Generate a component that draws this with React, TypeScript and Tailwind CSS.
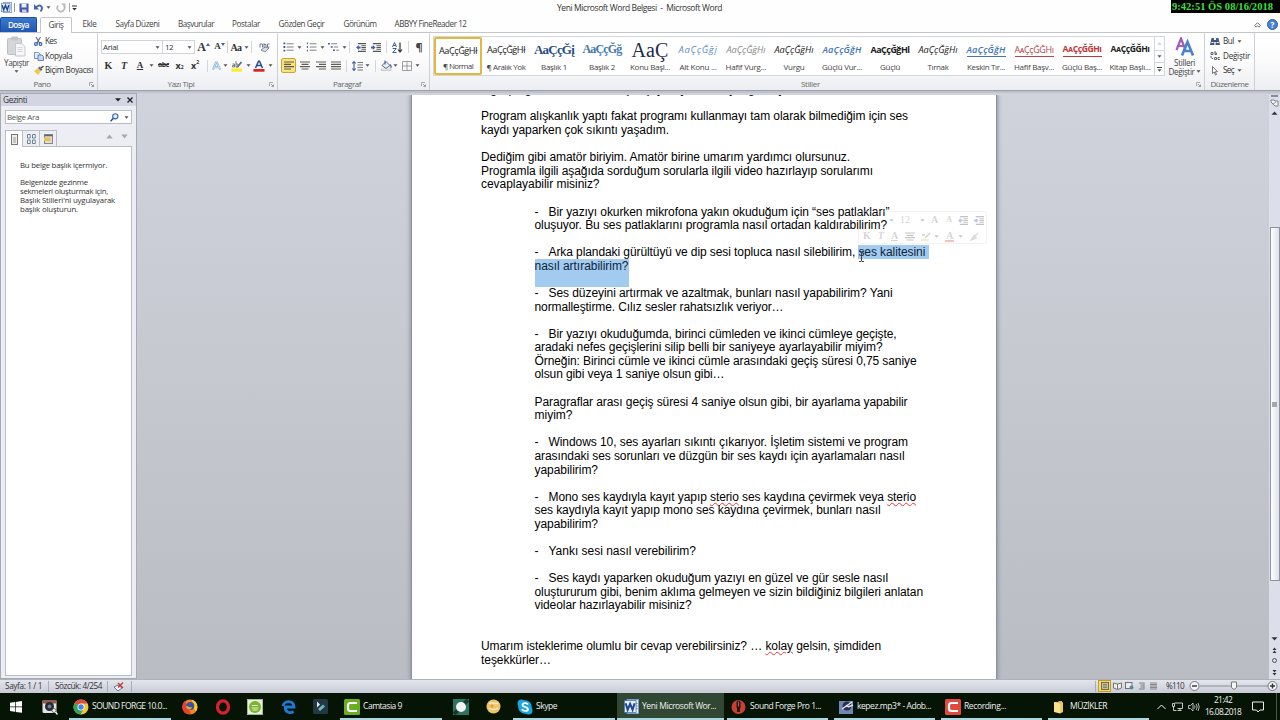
import { useLayoutEffect, useRef, type ReactNode } from 'react';
import clsx from 'clsx';

interface FitProps {
  w: number;
  className?: string;
  children: ReactNode;
}

// Text that is tracked in or out until it is exactly `w` pixels wide.
function Fit({ w, className, children }: FitProps) {
  const ref = useRef<HTMLSpanElement>(null);

  useLayoutEffect(() => {
    const el = ref.current;
    if (!el) return;
    el.style.letterSpacing = '0px';
    const natural = el.getBoundingClientRect().width;
    const count = el.textContent?.length || 1;
    el.style.letterSpacing = `${(w - natural) / count}px`;
  }, [w, children]);

  return (
    <span ref={ref} className={clsx('inline-block whitespace-pre', className)}>
      {children}
    </span>
  );
}

function Caret({ className }: { className?: string }) {
  return (
    <svg width="5" height="3" viewBox="0 0 5 3" className={clsx('shrink-0', className)}>
      <path d="M0.5 0.3h4L2.5 2.7z" fill="#555" />
    </svg>
  );
}

function Cell({ className, children }: { className: string; children?: ReactNode }) {
  return <div className={clsx('flex h-full shrink-0 items-center justify-center', className)}>{children}</div>;
}

function Sep() {
  return <div className="h-[12px] w-px shrink-0 bg-[#d3d6db]" />;
}

function WordIcon({ size }: { size: number }) {
  return (
    <svg width={size} height={size} viewBox="0 0 14 14" className="shrink-0">
      <rect x="3" y="0.5" width="10.5" height="13" fill="#fff" stroke="#7f9bc8" />
      <path d="M11 4h2M11 6.500h2M11 9h2" stroke="#6a8cc4" strokeWidth="0.8" />
      <rect x="0.300" y="1.500" width="11" height="11" fill="#e6eefa" stroke="#3d68b0" strokeWidth="0.700" />
      <path d="M1.500 4l1.900 6 2.300-5.500 2.300 5.500L9.900 4" fill="none" stroke="#1d4797" strokeWidth="1.900" />
    </svg>
  );
}

function TitleBar() {
  return (
    <div className="flex h-[17px] shrink-0 items-start bg-[#fefefe]">
      <div className="flex h-[15px] w-[555px] items-center pl-[1px]">
        <WordIcon size={11} />
        <div className="ml-[2px] h-[9px] w-px bg-[#999]" />
        <svg width="10" height="10" viewBox="0 0 10 10" className="ml-[4px]">
          <path d="M0.500 0.500h9v9h-8l-1-1z" fill="#4353ad" />
          <rect x="2.500" y="0.500" width="5" height="4" fill="#e9eefb" />
          <rect x="3" y="6.500" width="4.500" height="3" fill="#c9cfe6" />
        </svg>
        <svg width="10" height="10" viewBox="0 0 10 10" className="ml-[5px]">
          <path d="M2 4.500C6 0 10 4 6.500 8.500" fill="none" stroke="#3f62b5" strokeWidth="1.900" />
          <path d="M0 1v5.500h5z" fill="#3f62b5" />
        </svg>
        <Caret className="ml-[2px]" />
        <svg width="10" height="10" viewBox="0 0 10 10" className="ml-[5px]">
          <path d="M2.200 2.500A3.600 3.600 0 1 0 8 3" fill="none" stroke="#b6b9bd" strokeWidth="1.700" />
          <path d="M5 0.500h4.500v4z" fill="#b6b9bd" />
        </svg>
        <div className="ml-[3px] h-[9px] w-px bg-[#aaa]" />
        <svg width="5" height="6" viewBox="0 0 5 6" className="ml-[2px]">
          <path d="M0 1h5" stroke="#333" />
          <path d="M0.200 3h4.600L2.500 5.500z" fill="#333" />
        </svg>
      </div>
      <div className="flex h-[17px] flex-1 items-center pl-[2px] text-[8.500px] text-[#333]">
        <Fit w={165}>Yeni Microsoft Word Belgesi  -  Microsoft Word</Fit>
      </div>
      <div className="flex h-[13px] w-[109px] items-center bg-black pl-[1px] font-['Liberation_Serif',serif] text-[10.500px] font-bold text-[#3fe03f]">
        <Fit w={101}>9:42:51 ÖS 08/16/2018</Fit>
      </div>
    </div>
  );
}

const tabs = [
  { name: 'Ekle', cell: 'w-[35px]', w: 14 },
  { name: 'Sayfa Düzeni', cell: 'w-[61px]', w: 44 },
  { name: 'Başvurular', cell: 'w-[56px]', w: 36 },
  { name: 'Postalar', cell: 'w-[44px]', w: 28 },
  { name: 'Gözden Geçir', cell: 'w-[67px]', w: 46 },
  { name: 'Görünüm', cell: 'w-[50px]', w: 33 },
  { name: 'ABBYY FineReader 12', cell: 'w-[91px]', w: 72 },
];

function TabRow() {
  return (
    <div className="flex h-[16px] shrink-0 border-b border-[#c3c6cc] bg-[#fefefe] text-[8.100px] text-[#444]">
      <div className="flex w-[37px] items-center justify-center rounded-t-[2px] border border-b-0 border-[#1c4fa0] bg-gradient-to-b from-[#3a78cf] to-[#1f58b4] font-semibold text-white">
        <Fit w={21}>Dosya</Fit>
      </div>
      <div className="-mb-px ml-[3px] flex w-[32px] items-center justify-center rounded-t-[2px] border border-b-0 border-[#c3c6cc] bg-white pb-px">
        <Fit w={15}>Giriş</Fit>
      </div>
      {tabs.map((tab) => (
        <div key={tab.name} className={clsx('flex items-center justify-center', tab.cell)}>
          <Fit w={tab.w}>{tab.name}</Fit>
        </div>
      ))}
      <div className="flex flex-1 items-center justify-end gap-[6px] pr-[2px]">
        <svg width="7" height="6" viewBox="0 0 7 6">
          <path d="M3.500 0.700L6.300 3.500 5 5.200 3.500 3.700 2 5.200 0.700 3.500z" fill="#fff" stroke="#555" strokeWidth="0.800" />
        </svg>
        <div className="flex size-[11px] items-center justify-center rounded-full border border-[#2f5fb5] bg-[#4a80d4] text-[8px] font-bold text-white">
          ?
        </div>
      </div>
    </div>
  );
}

interface GroupProps {
  label: string;
  labelWidth: number;
  className: string;
  launcher?: boolean;
  children: ReactNode;
}

function Group({ label, labelWidth, className, launcher = true, children }: GroupProps) {
  return (
    <div className={clsx('flex shrink-0 flex-col border-r border-[#cdd0d6]', className)}>
      <div className="flex h-[46px]">{children}</div>
      <div className="flex h-[10px] items-center justify-center text-[8px] text-[#666]">
        <div className={clsx('flex flex-1 justify-center', launcher && 'pr-[5px]')}>
          <Fit w={labelWidth}>{label}</Fit>
        </div>
        {launcher && (
          <svg width="5" height="5" viewBox="0 0 5 5" className="mr-[3px]">
            <path d="M0.500 4V0.500H4" fill="none" stroke="#999" strokeWidth="0.800" />
            <path d="M2 2l2.500 2.500M4.500 2.500v2h-2" fill="none" stroke="#888" strokeWidth="0.800" />
          </svg>
        )}
      </div>
    </div>
  );
}

function Clipboard() {
  return (
    <Group label="Pano" labelWidth={17} className="w-[98px]">
      <div className="flex w-[33px] flex-col items-center pt-[3px] text-[8.100px] text-[#444]">
        <svg width="19" height="21" viewBox="0 0 19 21" className="shrink-0">
          <rect x="0.500" y="2.500" width="14" height="16" rx="1" fill="#d5d6da" stroke="#bcbec3" />
          <rect x="4" y="0.500" width="7" height="4" rx="1" fill="#c3c5ca" />
          <path d="M8.500 7.500h6l3.500 3v9.500h-9.500z" fill="#f7f7f9" stroke="#c5c7cc" />
          <path d="M10.500 11.500h5M10.500 13.500h5M10.500 15.500h5" stroke="#d4d6da" />
        </svg>
        <Fit w={25} className="leading-[12px]">Yapıştır</Fit>
        <Caret className="mt-[1px]" />
      </div>
      <div className="flex flex-col pt-[1px] pl-[1px] text-[8.100px] text-[#333]">
        <div className="flex h-[15px] items-center gap-[2px]">
          <svg width="9" height="9" viewBox="0 0 9 9">
            <path d="M2 0l3.500 6M6.500 0L3 6" stroke="#56698f" strokeWidth="1.100" />
            <circle cx="2" cy="7" r="1.400" fill="none" stroke="#2d56a8" strokeWidth="1.100" />
            <circle cx="6.500" cy="7" r="1.400" fill="none" stroke="#2d56a8" strokeWidth="1.100" />
          </svg>
          <Fit w={11.5}>Kes</Fit>
        </div>
        <div className="flex h-[14px] items-center gap-[1px]">
          <svg width="10" height="9" viewBox="0 0 10 9">
            <path d="M0.500 0.500h4l1.500 1.500v4.500H0.500z" fill="#e8f0fb" stroke="#5a7db5" strokeWidth="0.800" />
            <path d="M4 3h4l1.500 1.500v4H4z" fill="#c3d7f1" stroke="#4a70ae" strokeWidth="0.800" />
          </svg>
          <Fit w={27}>Kopyala</Fit>
        </div>
        <div className="flex h-[15px] items-center gap-[1px]">
          <svg width="10" height="9" viewBox="0 0 10 9">
            <path d="M0 5l4-3 3 3-3 4z" fill="#efc94e" />
            <path d="M4 2l1.500-1.500L8.500 3.500 7 5z" fill="#566d97" />
            <path d="M7 2l2.500-2" stroke="#4a3a2a" strokeWidth="1.400" />
          </svg>
          <Fit w={48}>Biçim Boyacısı</Fit>
        </div>
      </div>
    </Group>
  );
}

function FontGroup() {
  return (
    <Group label="Yazı Tipi" labelWidth={27} className="w-[180px]">
      <div className="flex flex-col pt-[7px] pl-[3px] text-[#333]">
        <div className="flex h-[14px] items-center">
          <div className="flex h-[14px] w-[62px] items-center justify-between border border-[#d0d3d8] bg-white pr-[2px] pl-[1px] text-[8px]">
            <Fit w={15}>Arial</Fit>
            <Caret />
          </div>
          <div className="flex h-[14px] w-[32px] items-center justify-between border border-l-0 border-[#d0d3d8] bg-white px-[2px] text-[8px]">
            <Fit w={8}>12</Fit>
            <Caret />
          </div>
          <Cell className="w-[17px] font-['Liberation_Serif',serif] text-[12px] font-bold">
            A
            <svg width="4" height="3" viewBox="0 0 4 3" className="mb-[6px]"><path d="M0 3h4L2 0z" fill="#3b5fa5" /></svg>
          </Cell>
          <Cell className="w-[15px] font-['Liberation_Serif',serif] text-[9px] font-bold">
            A
            <svg width="4" height="3" viewBox="0 0 4 3" className="mb-[6px]"><path d="M0 0h4L2 3z" fill="#3b5fa5" /></svg>
          </Cell>
          <Sep />
          <Cell className="w-[23px] gap-[2px] font-['Liberation_Serif',serif] text-[10px] font-bold">
            <Fit w={11}>Aa</Fit>
            <Caret />
          </Cell>
          <Sep />
          <Cell className="w-[24px]">
            <svg width="11" height="11" viewBox="0 0 11 11">
              <path d="M1 5.500V2h2.500v3.500M5 1v4.500h2V2.500H5M10.500 2H8.500v3h2" fill="none" stroke="#66718a" strokeWidth="0.900" />
              <path d="M2 8l4-3 4 1-4 4z" fill="#d9dde5" stroke="#68738a" strokeWidth="0.800" />
            </svg>
          </Cell>
        </div>
        <div className="flex h-[23px] items-center font-['Liberation_Serif',serif] text-[10px] font-bold">
          <Cell className="w-[15px]">K</Cell>
          <Cell className="w-[16px] italic">T</Cell>
          <Cell className="w-[16px] text-[9px] underline">A</Cell>
          <Cell className="w-[7px]"><Caret /></Cell>
          <Cell className="w-[17px] font-['Open_Sans',sans-serif] text-[7px] line-through">
            <Fit w={11}>abc</Fit>
          </Cell>
          <Cell className="w-[15px] font-['Open_Sans',sans-serif] text-[9px]">
            x<span className="mt-[5px] text-[5px]">2</span>
          </Cell>
          <Cell className="w-[16px] font-['Open_Sans',sans-serif] text-[9px]">
            x<span className="-mt-[5px] text-[5px]">2</span>
          </Cell>
          <Cell className="w-[9px]"><Sep /></Cell>
          <Cell className="w-[9px]">
            <svg width="10" height="10" viewBox="0 0 10 10">
              <path d="M1 9L4.500 1h1L9 9M2.500 6.500h5" fill="none" stroke="#78aede" strokeWidth="2.200" />
              <path d="M1 9L4.500 1h1L9 9M2.500 6.500h5" fill="none" stroke="#fff" strokeWidth="0.700" />
            </svg>
          </Cell>
          <Cell className="w-[8px]"><Caret /></Cell>
          <Cell className="w-[16px]">
            <svg width="12" height="12" viewBox="0 0 12 12">
              <rect x="0.500" y="8.500" width="10.500" height="3.200" fill="#f6ee2e" />
              <path d="M1.500 4h2v3h-2v-1.500h2M5 1v6h2V4H5" fill="none" stroke="#666" strokeWidth="0.800" />
              <path d="M6 7.500l4.500-5.500" stroke="#5a6a86" strokeWidth="1.700" />
              <path d="M5 8.500l1-2 1.500 1z" fill="#d8a83c" />
            </svg>
          </Cell>
          <Cell className="w-[7px]"><Caret /></Cell>
          <Cell className="w-[14px]">
            <svg width="12" height="12" viewBox="0 0 12 12">
              <path d="M2.500 8L5.500 1.200h1L9.500 8M4 5.500h4" fill="none" stroke="#2c4a85" strokeWidth="1.500" />
              <rect x="0.500" y="9" width="11" height="2.700" fill="#d8231f" />
            </svg>
          </Cell>
          <Cell className="w-[8px]"><Caret /></Cell>
        </div>
      </div>
    </Group>
  );
}

function ListIcon({ kind }: { kind: 'bullet' | 'number' | 'multi' }) {
  return (
    <svg width="11" height="10" viewBox="0 0 12 10">
      {kind === 'multi' ? (
        <>
          <path d="M0 1.500h2M3 5h2M5.500 8.500h2" stroke="#3d5a99" strokeWidth="1.500" />
          <path d="M3.500 1.500H10M6.500 5H11M9 8.500h3" stroke="#777" />
        </>
      ) : (
        <>
          <path
            d="M1.500 0v2M1.500 4v2M1.500 8v2"
            stroke="#3d5a99"
            strokeWidth={kind === 'bullet' ? 2 : 1.1}
          />
          <path d="M4 1.500h7.500M4 5h7.500M4 8.500h7.500" stroke="#777" />
        </>
      )}
    </svg>
  );
}

function IndentIcon({ flip }: { flip?: boolean }) {
  return (
    <svg width="10" height="9" viewBox="0 0 11 10">
      <path d="M2 0.700h9M6 3h5M6 5h5M6 7h5M2 9.300h9" stroke="#555" strokeWidth="1.200" />
      <path d={flip ? 'M0 4h2V2.200L5 5 2 7.800V6H0z' : 'M5 4H3V2.200L0 5l3 2.800V6h2z'} fill="#3a63b0" />
    </svg>
  );
}

function AlignIcon({ path }: { path: string }) {
  return (
    <svg width="10" height="9" viewBox="0 0 10 9">
      <path d={path} stroke="#5c5c55" strokeWidth="1.200" />
    </svg>
  );
}

function ParagraphGroup() {
  return (
    <Group label="Paragraf" labelWidth={28} className="w-[152px]">
      <div className="flex flex-col pt-[7px] pl-[3px]">
        <div className="flex h-[14px] items-center">
          <Cell className="w-[15px]"><ListIcon kind="bullet" /></Cell>
          <Cell className="w-[7px]"><Caret /></Cell>
          <Cell className="w-[16px]"><ListIcon kind="number" /></Cell>
          <Cell className="w-[7px]"><Caret /></Cell>
          <Cell className="w-[15px]"><ListIcon kind="multi" /></Cell>
          <Cell className="w-[6px]"><Caret /></Cell>
          <Cell className="w-[5px]"><Sep /></Cell>
          <Cell className="w-[17px]"><IndentIcon /></Cell>
          <Cell className="w-[13px]"><IndentIcon flip /></Cell>
          <Cell className="w-[8px]"><Sep /></Cell>
          <Cell className="w-[15px]">
            <svg width="11" height="11" viewBox="0 0 11 11">
              <path d="M0.500 5L2.500 0.500 4.500 5M1.300 3.500h2.400M0.700 6.500h3.600L0.700 10.500h3.800" fill="none" stroke="#3c5c9d" strokeWidth="1" />
              <path d="M8 0.500v9M6 7.500l2 2.500 2-2.500" fill="none" stroke="#333" strokeWidth="1.200" />
            </svg>
          </Cell>
          <Cell className="w-[7px]"><Sep /></Cell>
          <Cell className="w-[14px] text-[11px] font-bold text-[#444]">¶</Cell>
        </div>
        <div className="flex h-[23px] items-center">
          <div className="flex h-[15px] w-[15px] items-center justify-center rounded-[2px] border border-[#c8a63c] bg-[#f8e47c]">
            <AlignIcon path="M0 1h10M0 3.300h7M0 5.600h10M0 8h7" />
          </div>
          <Cell className="w-[17px]"><AlignIcon path="M0 1h10M1.500 3.300h7M0 5.600h10M1.500 8h7" /></Cell>
          <Cell className="w-[15px]"><AlignIcon path="M0 1h10M3 3.300h7M0 5.600h10M3 8h7" /></Cell>
          <Cell className="w-[16px]"><AlignIcon path="M0 1h10M0 3.300h10M0 5.600h10M0 8h10" /></Cell>
          <Cell className="w-[5px]"><Sep /></Cell>
          <Cell className="w-[16px]">
            <svg width="11" height="10" viewBox="0 0 11 10">
              <path d="M2 1v8M0.300 2.500L2 0.600l1.700 1.900M0.300 7.500L2 9.400l1.700-1.900" fill="none" stroke="#3a5ea8" strokeWidth="1.100" />
              <path d="M5.500 1.500H11M5.500 4H11M5.500 6.500H11M5.500 9H11" stroke="#777" />
            </svg>
          </Cell>
          <Cell className="w-[5px]"><Caret /></Cell>
          <Cell className="w-[10px]"><Sep /></Cell>
          <Cell className="w-[12px]">
            <svg width="11" height="11" viewBox="0 0 11 11">
              <path d="M1 5.500l4-4 4 4-4 3z" fill="#e9eef6" stroke="#4a5a7a" strokeWidth="0.900" />
              <path d="M4 0.500v4M9 4.500c1.500 1.500 1.500 3 0.500 3.500" fill="none" stroke="#3e5e9e" strokeWidth="1.100" />
              <rect x="0.500" y="9" width="9.500" height="1.700" fill="#fff" stroke="#999" strokeWidth="0.500" />
            </svg>
          </Cell>
          <Cell className="w-[7px]"><Caret /></Cell>
          <Cell className="w-[15px]">
            <svg width="10" height="10" viewBox="0 0 10 10">
              <path d="M0.500 0.500h9v9h-9zM5 0.500v9M0.500 5h9" fill="none" stroke="#888" strokeWidth="0.800" />
            </svg>
          </Cell>
          <Cell className="w-[7px]"><Caret /></Cell>
        </div>
      </div>
    </Group>
  );
}

const wordStyles = [
  { name: '¶ Normal', w: 30, sample: 'AaÇçĞğHł', sw: 38, look: 'text-[9.200px] text-[#222]' },
  { name: '¶ Aralık Yok', w: 39, sample: 'AaÇçĞğHł', sw: 38, look: 'text-[9.200px] text-[#222]' },
  { name: 'Başlık 1', w: 26, sample: 'AaÇçĞį', sw: 40, look: "text-[13px] font-bold text-[#2a4f80] font-['Liberation_Serif',serif]" },
  { name: 'Başlık 2', w: 26, sample: 'AaÇçĞğ', sw: 39, look: "text-[12px] font-bold text-[#4578b0] font-['Liberation_Serif',serif]" },
  { name: 'Konu Başl...', w: 40, sample: 'AaÇ', sw: 37, look: "text-[20px] text-[#1d2c4a] font-['Liberation_Serif',serif]" },
  { name: 'Alt Konu ...', w: 37, sample: 'AaÇçĞğį', sw: 39, look: 'text-[9.500px] italic text-[#5e8fc4]' },
  { name: 'Hafif Vurg...', w: 41, sample: 'AaÇçĞğHı', sw: 39, look: 'text-[9.200px] italic text-[#888]' },
  { name: 'Vurgu', w: 21, sample: 'AaÇçĞğHı', sw: 39, look: 'text-[9.200px] italic font-medium text-[#222]' },
  { name: 'Güçlü Vur...', w: 40, sample: 'AaÇçĞğH', sw: 39, look: 'text-[9.200px] italic font-semibold text-[#4377b3]' },
  { name: 'Güçlü', w: 20, sample: 'AaÇçĞğHl', sw: 39, look: 'text-[9px] font-bold text-[#222]' },
  { name: 'Tırnak', w: 21, sample: 'AaÇçĞğHı', sw: 39, look: 'text-[9.200px] italic text-[#222]' },
  { name: 'Keskin Tır...', w: 38, sample: 'AaÇçĞğH', sw: 39, look: 'text-[9.200px] italic font-semibold text-[#4377b3] border-b border-[#4377b3]' },
  { name: 'Hafif Başv...', w: 40, sample: 'AᴀÇçĞĞHı', sw: 39, look: 'text-[9px] text-[#b9474b] border-b border-[#b9474b]' },
  { name: 'Güçlü Baş...', w: 40, sample: 'AᴀÇçĞĞHı', sw: 39, look: 'text-[8.600px] font-bold text-[#c03538] border-b border-[#c03538]' },
  { name: 'Kitap Başlı...', w: 41, sample: 'AᴀÇçĞĞHı', sw: 39, look: 'text-[8.600px] font-bold text-[#222]' },
];

function StylesGroup() {
  return (
    <Group label="Stiller" labelWidth={19} className="w-[775px]">
      <div className="mt-[3px] ml-[3px] flex h-[40px] border border-[#d3d6db] bg-white">
        {wordStyles.map((style, i) => (
          <div
            key={style.name}
            className={clsx(
              'flex w-[48px] flex-col items-center',
              i === 0 && 'rounded-[2px] border-2 border-[#e2b83e]',
            )}
          >
            <div className={clsx('flex shrink-0 items-center', i === 0 ? 'h-[22px]' : 'h-[25px]')}>
              <Fit w={style.sw} className={clsx(style.sample.length === 3 ? 'leading-[22px]' : 'leading-[13px]', style.look)}>
                {style.sample}
              </Fit>
            </div>
            <div className="flex h-[10px] items-center text-[8px] text-[#444]">
              <Fit w={style.w}>{style.name}</Fit>
            </div>
          </div>
        ))}
        <div className="grid w-[10px] grid-rows-[13px_13px_12px] border-l border-[#d3d6db]">
          <div className="flex items-center justify-center"><Caret className="rotate-180 opacity-30" /></div>
          <div className="flex items-center justify-center border-y border-[#d3d6db]"><Caret /></div>
          <div className="flex flex-col items-center justify-center gap-px">
            <div className="h-px w-[5px] bg-[#444]" />
            <Caret />
          </div>
        </div>
      </div>
      <div className="ml-px flex w-[37px] flex-col items-center pt-[4px] text-[8.100px] text-[#444]">
        <svg width="20" height="20" viewBox="0 0 20 20" className="shrink-0">
          <path d="M1.500 13L6 1.500 10.500 13M3 9h6" fill="none" stroke="#a35bb5" strokeWidth="2.200" />
          <path d="M7 18.500L12.500 5 18 18.500M9 14h7" fill="none" stroke="#4c82c9" strokeWidth="2.600" />
        </svg>
        <Fit w={21} className="mt-[2px] leading-[8px]">Stilleri</Fit>
        <div className="flex items-center gap-[1px]">
          <Fit w={26} className="leading-[9px]">Değiştir</Fit>
          <Caret />
        </div>
      </div>
    </Group>
  );
}

function EditingGroup() {
  return (
    <Group label="Düzenleme" labelWidth={38} className="w-[50px]" launcher={false}>
      <div className="flex flex-col pt-px pl-[5px] text-[8.100px] text-[#333]">
        <div className="flex h-[15px] items-center">
          <svg width="10" height="9" viewBox="0 0 10 9">
            <path d="M0 8l1.500-7h2.300l0.700 7zM5.500 8l0.700-7h2.300L10 8z" fill="#42557d" />
            <path d="M4 3h2v2H4z" fill="#42557d" />
            <path d="M1.500 5.500h2M6.700 5.500h2" stroke="#fff" strokeWidth="1" />
          </svg>
          <Fit w={11} className="ml-[3px]">Bul</Fit>
          <Caret className="ml-[3px]" />
        </div>
        <div className="flex h-[14px] items-center">
          <svg width="10" height="10" viewBox="0 0 10 10">
            <path d="M1 3.500V1.500h2v2H1M5 0v3.500h1.500V2H5M4.500 8.500v-2h2v2zM9.800 6.500H8v2h1.800" fill="none" stroke="#555" strokeWidth="0.900" />
            <path d="M1 5c0 2 0.500 2.500 2 2.500" fill="none" stroke="#3b62ab" strokeWidth="1" />
          </svg>
          <Fit w={27} className="ml-[3px]">Değiştir</Fit>
        </div>
        <div className="flex h-[15px] items-center">
          <svg width="10" height="10" viewBox="0 0 10 10">
            <path d="M2.500 0.500v7l1.700-1.500 1.300 3 1-0.500-1.200-2.800h2.200z" fill="#fff" stroke="#555" strokeWidth="0.800" />
          </svg>
          <Fit w={11} className="ml-[3px]">Seç</Fit>
          <Caret className="ml-[3px]" />
        </div>
      </div>
    </Group>
  );
}

function Ribbon() {
  return (
    <div className="flex h-[57px] shrink-0 bg-gradient-to-b from-white via-[#fbfbfc] to-[#eceef2]">
      <Clipboard />
      <FontGroup />
      <ParagraphGroup />
      <StylesGroup />
      <EditingGroup />
    </div>
  );
}

function NavigationPane() {
  return (
    <div className="flex w-[137px] shrink-0 flex-col border border-[#a5a9b3] bg-[#eceef3]">
      <div className="flex h-[12px] items-center bg-[#d3d6e2] pr-[3px] pl-[2px] text-[8.300px] text-[#333]">
        <Fit w={24}>Gezinti</Fit>
        <svg width="6" height="4" viewBox="0 0 6 4" className="ml-auto">
          <path d="M0 0.300h6L3 3.500z" fill="#222" />
        </svg>
        <svg width="6" height="6" viewBox="0 0 6 6" className="ml-[6px]">
          <path d="M0.500 0.500l5 5M5.500 0.500l-5 5" stroke="#222" strokeWidth="1.300" />
        </svg>
      </div>
      <div className="mt-[4px] ml-[4px] flex h-[14px] w-[127px] items-center border border-[#b9bdc6] bg-white pr-[2px] pl-[1px] text-[8px] text-[#555]">
        <Fit w={32}>Belge Ara</Fit>
        <svg width="9" height="9" viewBox="0 0 9 9" className="ml-auto">
          <circle cx="5.300" cy="3.300" r="2.600" fill="#e4effa" stroke="#3466a8" strokeWidth="1.100" />
          <path d="M3.400 5.300L0.600 8.300" stroke="#24508e" strokeWidth="1.500" />
        </svg>
        <Caret className="ml-[5px]" />
      </div>
      <div className="mt-[6px] ml-[4px] flex h-[16px] w-[127px]">
        <div className="z-10 -mb-px flex w-[18px] items-center justify-center border border-b-0 border-[#b9bdc6] bg-white">
          <svg width="7" height="11" viewBox="0 0 7 11">
            <rect x="0.500" y="0.500" width="6" height="10" fill="#eee" stroke="#777" />
            <path d="M2 4h3M2 6h3M2 8h3" stroke="#999" />
          </svg>
        </div>
        <div className="flex w-[17px] items-center justify-center border-t border-r border-[#b9bdc6]">
          <svg width="9" height="10" viewBox="0 0 9 10">
            <path d="M0.500 0.500h2.700v3.500H0.500zM5.500 0.500h2.700v3.500H5.500zM0.500 6h2.700v3.500H0.500zM5.500 6h2.700v3.500H5.500z" fill="#fff" stroke="#5d6f8d" strokeWidth="0.900" />
          </svg>
        </div>
        <div className="flex w-[17px] items-center justify-center border-t border-r border-[#b9bdc6]">
          <svg width="9" height="10" viewBox="0 0 9 10">
            <rect x="0.500" y="0.500" width="8" height="9" fill="#ddd" stroke="#888" />
            <path d="M0.500 1.500h8" stroke="#666" strokeWidth="1.500" />
            <rect x="0" y="3.500" width="6.500" height="3.500" fill="#e8c24c" />
          </svg>
        </div>
        <div className="flex flex-1 items-start justify-end gap-[8px] pt-[4px] pr-[4px]">
          <svg width="7" height="5" viewBox="0 0 7 5"><path d="M0.300 4.500h6.400L3.500 0.500z" fill="#a6a8ad" /></svg>
          <svg width="7" height="5" viewBox="0 0 7 5"><path d="M0.300 0.500h6.400L3.500 4.500z" fill="#a6a8ad" /></svg>
        </div>
      </div>
      <div className="mb-[2px] ml-[4px] flex w-[127px] flex-1 flex-col items-start border border-[#b9bdc6] bg-white pt-[14px] pl-[14px] text-[7.800px] leading-[8.700px] text-[#333]">
        <Fit w={87}>Bu belge başlık içermiyor.</Fit>
        <div className="mt-[8.700px] flex flex-col items-start">
          <Fit w={68}>Belgenizde gezinme</Fit>
          <Fit w={88}>sekmeleri oluşturmak için,</Fit>
          <Fit w={95}>Başlık Stilleri'ni uygulayarak</Fit>
          <Fit w={58}>başlık oluşturun.</Fit>
        </div>
      </div>
    </div>
  );
}

function Misspelled({ children }: { children: ReactNode }) {
  return (
    <span className="underline decoration-[#e03a3a] decoration-wavy decoration-[0.500px] underline-offset-[1px]">
      {children}
    </span>
  );
}

interface DocLine {
  kind: 'body' | 'item' | 'cont' | 'blank';
  w?: number;
  text?: ReactNode;
}

const blank: DocLine = { kind: 'blank' };

const lines: DocLine[] = [
  { kind: 'body', w: 427, text: 'Program alışkanlık yaptı fakat programı kullanmayı tam olarak bilmediğim için ses' },
  { kind: 'body', w: 188, text: 'kaydı yaparken çok sıkıntı yaşadım.' },
  blank,
  { kind: 'body', w: 369, text: 'Dediğim gibi amatör biriyim. Amatör birine umarım yardımcı olursunuz.' },
  { kind: 'body', w: 392, text: 'Programla ilgili aşağıda sorduğum sorularla ilgili video hazırlayıp sorularımı' },
  { kind: 'body', w: 118.5, text: 'cevaplayabilir misiniz?' },
  blank,
  { kind: 'item', w: 341, text: 'Bir yazıyı okurken mikrofona yakın okuduğum için “ses patlakları”' },
  { kind: 'cont', w: 352.5, text: 'oluşuyor. Bu ses patlaklarını programla nasıl ortadan kaldırabilirim?' },
  blank,
  {
    kind: 'item',
    w: 380,
    text: (
      <>
        Arka plandaki gürültüyü ve dip sesi topluca nasıl silebilirim,{' '}
        <span className="bg-[#a3cbf0] text-[#10243c]">ses kalitesini </span>
      </>
    ),
  },
  {
    kind: 'cont',
    w: 94,
    text: <span className="bg-[#a3cbf0] pb-[14px] text-[#10243c]">nasıl artırabilirim?</span>,
  },
  blank,
  { kind: 'item', w: 344, text: 'Ses düzeyini artırmak ve azaltmak, bunları nasıl yapabilirim? Yani' },
  { kind: 'cont', w: 249, text: 'normalleştirme. Cılız sesler rahatsızlık veriyor…' },
  blank,
  { kind: 'item', w: 348, text: 'Bir yazıyı okuduğumda, birinci cümleden ve ikinci cümleye geçişte,' },
  { kind: 'cont', w: 348, text: 'aradaki nefes geçişlerini silip belli bir saniyeye ayarlayabilir miyim?' },
  { kind: 'cont', w: 382, text: 'Örneğin: Birinci cümle ve ikinci cümle arasındaki geçiş süresi 0,75 saniye' },
  { kind: 'cont', w: 190, text: 'olsun gibi veya 1 saniye olsun gibi…' },
  blank,
  { kind: 'cont', w: 373, text: 'Paragraflar arası geçiş süresi 4 saniye olsun gibi, bir ayarlama yapabilir' },
  { kind: 'cont', w: 38, text: 'miyim?' },
  blank,
  { kind: 'item', w: 359.5, text: 'Windows 10, ses ayarları sıkıntı çıkarıyor. İşletim sistemi ve program' },
  { kind: 'cont', w: 370, text: 'arasındaki ses sorunları ve düzgün bir ses kaydı için ayarlamaları nasıl' },
  { kind: 'cont', w: 63.5, text: 'yapabilirim?' },
  blank,
  {
    kind: 'item',
    w: 367.5,
    text: (
      <>
        Mono ses kaydıyla kayıt yapıp <Misspelled>sterio</Misspelled> ses kaydına çevirmek veya{' '}
        <Misspelled>sterio</Misspelled>
      </>
    ),
  },
  { kind: 'cont', w: 346, text: 'ses kaydıyla kayıt yapıp mono ses kaydına çevirmek, bunları nasıl' },
  { kind: 'cont', w: 63.5, text: 'yapabilirim?' },
  blank,
  { kind: 'item', w: 147.5, text: 'Yankı sesi nasıl verebilirim?' },
  blank,
  { kind: 'item', w: 339.5, text: 'Ses kaydı yaparken okuduğum yazıyı en güzel ve gür sesle nasıl' },
  { kind: 'cont', w: 388.5, text: 'oluştururum gibi, benim aklıma gelmeyen ve sizin bildiğiniz bilgileri anlatan' },
  { kind: 'cont', w: 157, text: 'videolar hazırlayabilir misiniz?' },
  blank,
  blank,
  {
    kind: 'body',
    w: 400,
    text: (
      <>
        Umarım isteklerime olumlu bir cevap verebilirsiniz? … <Misspelled>kolay</Misspelled> gelsin, şimdiden
      </>
    ),
  },
  { kind: 'body', w: 70, text: 'teşekkürler…' },
];

function MiniToolbar() {
  return (
    <div className="absolute top-[116px] left-[446px] h-[33px] w-[129px] rounded-[2px] border border-[#ddd] font-['Liberation_Serif',serif] text-[10px] font-bold text-[#888] opacity-35">
      <div className="flex h-[16px] items-center justify-end gap-[6px] pr-[2px]">
        <Caret />
        <span className="font-normal">12</span>
        <Caret className="ml-[4px]" />
        <span>A</span>
        <span className="ml-[2px] text-[8px]">A</span>
        <IndentIcon />
        <IndentIcon flip />
      </div>
      <div className="flex h-[16px] items-center gap-[7px] pl-[4px]">
        <span>K</span>
        <span className="italic">T</span>
        <span className="underline">A</span>
        <AlignIcon path="M0 1h10M1.500 3.300h7M0 5.600h10M1.500 8h7" />
        <svg width="10" height="10" viewBox="0 0 10 10" className="-mr-[4px] -ml-[1px]">
          <path d="M0 9h8" stroke="#e3da4a" strokeWidth="2" />
          <path d="M1 4h3M4 7l5-5" stroke="#888" strokeWidth="1.500" />
        </svg>
        <Caret />
        <span className="-mr-[3px] -ml-[1px] border-b-2 border-[#e05050] px-px leading-[9px]">A</span>
        <Caret />
        <svg width="9" height="9" viewBox="0 0 9 9">
          <path d="M1 8l3-4 2 2zM5 4l3-3" fill="#bbb" stroke="#999" strokeWidth="1.500" />
        </svg>
      </div>
    </div>
  );
}

function DocumentPage() {
  return (
    <div className="relative ml-[274px] w-[586px] shrink-0 overflow-hidden border-x border-[#8d919b] bg-white pl-[69px] font-['Liberation_Sans',Arial,sans-serif] text-[12px] leading-[13.580px] text-black shadow-[0_0_4px_1px_#8f939d]">
      {/* the line scrolled under the ribbon, only its descenders show */}
      <div className="-mt-[11.700px] h-[13.580px] pl-[3px]">
        <Fit w={310}>ağır, programların kurulumu çok şey ve yeniden ayar gerekiyor</Fit>
      </div>
      <div className="h-[13.580px]" />
      {lines.map((line, i) => (
        <div key={i} className={clsx('flex h-[13.580px]', (line.kind === 'item' || line.kind === 'cont') && 'pl-[53.500px]')}>
          {line.kind === 'item' && <span className="w-[14px]">-</span>}
          {line.w && <Fit w={line.w}>{line.text}</Fit>}
        </div>
      ))}
      <MiniToolbar />
      <svg width="7" height="11" viewBox="0 0 7 11" className="absolute top-[156px] left-[446px]">
        <path d="M1 0.500h2l0.500 0.500 0.500-0.500h2M3.500 1v9M1 10.500h2l0.500-0.500 0.500 0.500h2" fill="none" stroke="#333" strokeWidth="0.900" />
      </svg>
    </div>
  );
}

function ScrollBar() {
  return (
    <div className="ml-auto flex w-[11px] flex-col items-center bg-[#dcdeea]">
      <div className="h-[2px] w-[7px] bg-[#8a8e99]" />
      <svg width="9" height="10" viewBox="0 0 9 10" className="mt-[1px] shrink-0">
        <path d="M1 2h3l1 1h3v5H5L4 7 1 4z" fill="#f3f4f7" stroke="#777" strokeWidth="0.900" />
        <path d="M3 6l3-2" stroke="#777" strokeWidth="0.800" />
      </svg>
      <svg width="7" height="4" viewBox="0 0 7 4" className="mt-[3px] shrink-0"><path d="M0.500 3.700h6L3.500 0.500z" fill="#333" /></svg>
      <div className="mt-[112px] flex h-[354px] w-[10px] shrink-0 items-center justify-center border border-[#8f939f] bg-gradient-to-r from-white to-[#dfe1ec]">
        <div className="h-[5px] w-[5px] bg-[#a5a7ae]" />
      </div>
      <svg width="7" height="4" viewBox="0 0 7 4" className="mt-[56px] shrink-0"><path d="M0.500 0.300h6L3.500 3.500z" fill="#333" /></svg>
      <svg width="7" height="29" viewBox="0 0 7 29" className="mt-[6px] shrink-0">
        <path d="M1.500 3L3.500 0.500 5.500 3zM1.500 6L3.500 3.500 5.500 6zM1.500 23L3.500 25.500 5.500 23zM1.500 26L3.500 28.500 5.500 26z" fill="#333" />
        <circle cx="3.500" cy="13.500" r="2" fill="none" stroke="#444" strokeWidth="0.900" />
      </svg>
    </div>
  );
}

function StatusBar() {
  return (
    <div className="flex h-[14px] shrink-0 items-center border-t border-[#aeb1b9] bg-gradient-to-b from-[#e4e6ee] to-[#c8cbd5] pl-[5px] text-[8.200px] text-[#333]">
      <Fit w={37}>Sayfa: 1 / 1</Fit>
      <div className="ml-[6px] h-[11px] w-px bg-[#a9acb6]" />
      <Fit w={47} className="ml-[6px]">Sözcük: 4/254</Fit>
      <div className="ml-[5px] h-[11px] w-px bg-[#a9acb6]" />
      <svg width="12" height="10" viewBox="0 0 12 10" className="ml-[5px]">
        <path d="M1 5l4-2 4 3-4 3z" fill="#f4f6fb" stroke="#4c68a5" strokeWidth="0.900" />
        <path d="M5 1l5 5M10 0.500l-5 5" stroke="#d33a34" strokeWidth="1.400" />
      </svg>
      <div className="ml-[6px] h-[11px] w-px bg-[#a9acb6]" />
      <div className="ml-auto flex items-center">
        <div className="h-[11px] w-px bg-[#a9acb6]" />
        <div className="ml-[2px] flex h-[12px] w-[13px] items-center justify-center border border-[#c49b26] bg-[#f6dc6a]">
          <svg width="8" height="8" viewBox="0 0 8 8"><rect x="0.500" y="0.500" width="7" height="7" fill="#c9c49d" stroke="#6d6a50" /><path d="M2 2.500h4M2 4h4M2 5.500h4" stroke="#6d6a50" strokeWidth="0.700" /></svg>
        </div>
        <svg width="9" height="8" viewBox="0 0 9 8" className="ml-[2px]"><path d="M0.500 1l4 1 4-1v5l-4 1.500-4-1.500zM4.500 2v5" fill="#eee" stroke="#666" strokeWidth="0.900" /></svg>
        <svg width="9" height="8" viewBox="0 0 9 8" className="ml-[3px]"><rect x="0.500" y="0.500" width="6.500" height="6" fill="#e9ebf0" stroke="#666" strokeWidth="0.900" /><circle cx="6.500" cy="5.500" r="2" fill="#54908f" /></svg>
        <svg width="7" height="8" viewBox="0 0 7 8" className="ml-[4px]"><path d="M1 1h4.500M2.500 3h3M2.500 5h3M1 7h4.500M6 0.500v7" stroke="#777" strokeWidth="0.900" /></svg>
        <svg width="7" height="8" viewBox="0 0 7 8" className="ml-[5px]"><path d="M0 1h7M0 2.500h7M0 4h7M0 5.500h7M0 7h7" stroke="#888" /></svg>
        <Fit w={18} className="ml-[9px]">%110</Fit>
        <svg width="92" height="12" viewBox="0 0 92 12" className="ml-[4px]">
          <path d="M12 6h68" stroke="#8b8f9a" />
          <circle cx="6.500" cy="6" r="4.500" fill="#f3f4f8" stroke="#777" />
          <path d="M4 6h5" stroke="#333" strokeWidth="1.400" />
          <path d="M43.500 2h5v5.500l-2.500 2-2.500-2z" fill="#f5f6f9" stroke="#777" />
          <circle cx="84.500" cy="6" r="4.500" fill="#f3f4f8" stroke="#777" />
          <path d="M82 6h5M84.500 3.500v5" stroke="#333" strokeWidth="1.400" />
        </svg>
      </div>
    </div>
  );
}

interface TaskProps {
  icon: ReactNode;
  label?: string;
  w?: number;
  className: string;
  active?: boolean;
}

function Task({ icon, label, w = 0, className, active }: TaskProps) {
  return (
    <div
      className={clsx(
        'flex h-full shrink-0 items-center',
        label ? 'gap-[3px] border-b-2 border-[#a9d8e0] pt-[2px] pl-[4px]' : 'justify-center',
        active && 'bg-[#304833]',
        className,
      )}
    >
      {icon}
      {label && <Fit w={w}>{label}</Fit>}
    </div>
  );
}

function CamtasiaIcon({ color }: { color: string }) {
  return (
    <svg width="16" height="16" viewBox="0 0 16 16" className="shrink-0">
      <rect width="16" height="16" rx="1.500" fill={color} />
      <path d="M13 4H6.500Q4 4 4 6.500v3Q4 12 6.500 12H13" fill="none" stroke="#fff" strokeWidth="2.200" />
    </svg>
  );
}

const chromeIcon = (
  <svg width="16" height="16" viewBox="0 0 16 16" className="shrink-0">
    <circle cx="8" cy="8" r="7.500" fill="#f2c63a" />
    <path d="M8 8L1.500 4.200A7.500 7.500 0 0 1 14.500 4.500H8z" fill="#dd4b3e" />
    <path d="M8 8L1.500 4.200A7.500 7.500 0 0 0 7.500 15.500L11 9.500z" fill="#36a35a" />
    <circle cx="8" cy="8" r="3.500" fill="#fff" />
    <circle cx="8" cy="8" r="2.700" fill="#4384ee" />
  </svg>
);

const skypeIcon = (
  <svg width="16" height="16" viewBox="0 0 16 16" className="shrink-0">
    <circle cx="8" cy="8" r="6.800" fill="#1ba5e2" />
    <circle cx="4.500" cy="4.500" r="4" fill="#1ba5e2" />
    <circle cx="11.500" cy="11.500" r="4" fill="#1ba5e2" />
    <path d="M11 5.500C10 3.500 5.500 3.800 5.500 6c0 2.500 5.500 1.500 5.500 4.200 0 2.300-5 2.300-6 0" fill="none" stroke="#fff" strokeWidth="1.800" />
  </svg>
);

const soundForgeIcon = (
  <svg width="15" height="16" viewBox="0 0 15 16" className="mr-px shrink-0">
    <circle cx="7.500" cy="8" r="7" fill="#c8402f" />
    <path d="M5.500 3Q7.500 0 9.500 3v6H9v4H6V9h-0.500z" fill="#2c1613" />
    <path d="M7.500 2.500v5" stroke="#777" strokeWidth="1" />
  </svg>
);

const auditionIcon = (
  <svg width="16" height="16" viewBox="0 0 16 16" className="shrink-0">
    <rect x="1" y="2" width="14" height="13" fill="#7086b4" />
    <circle cx="9" cy="7" r="4.500" fill="#28304a" />
    <path d="M4 10L14 3M10 8l5-2" stroke="#dfe4ef" strokeWidth="1.500" />
    <circle cx="9" cy="7" r="1.300" fill="#cfd6e6" />
  </svg>
);

const folderIcon = (
  <svg width="11" height="14" viewBox="0 0 11 14" className="mr-[3px] ml-px shrink-0">
    <path d="M1 2h4l1-1h3v11H1z" fill="#e3b958" />
    <path d="M1 2l6 1.500v10L1 12z" fill="#fbe08f" />
    <path d="M7 3.500L10 2v10l-3 1.500z" fill="#f0c869" />
  </svg>
);

function Taskbar() {
  return (
    <div className="flex h-[27px] shrink-0 items-center overflow-hidden bg-[#051405] text-[8.500px] text-[#f0f0f0]">
      <Task
        className="w-[32px]"
        icon={
          <svg width="12" height="12" viewBox="0 0 12 12">
            <path d="M0 1.800l5-0.700v4.500H0zM5.700 1l6.300-0.900v5.500H5.700zM0 6.300h5v4.500l-5-0.700zM5.700 6.300H12v5.500l-6.300-0.900z" fill="#fff" />
          </svg>
        }
      />
      <Task
        className="w-[36px]"
        icon={
          <svg width="16" height="16" viewBox="0 0 16 16">
            <rect x="0.500" y="1" width="14" height="13" rx="1.500" fill="#e6e2dd" />
            <rect x="0.500" y="1" width="14" height="3.500" fill="#8e5c4c" />
            <circle cx="7.500" cy="7.500" r="4.500" fill="#222a35" />
            <circle cx="7.500" cy="7.500" r="2" fill="#6b7d94" />
            <circle cx="12" cy="11.500" r="2" fill="#eee" stroke="#444" strokeWidth="0.700" />
            <path d="M13.500 13l2 2.500" stroke="#eee" strokeWidth="1.500" />
          </svg>
        }
      />
      <Task className="ml-[1px] w-[102px]" icon={chromeIcon} label="SOUND FORGE 10.0..." w={75} />
      <Task
        className="w-[38px]"
        icon={
          <svg width="16" height="16" viewBox="0 0 16 16">
            <circle cx="8" cy="8" r="7.500" fill="#f0861f" />
            <path d="M3 2a7.500 7.500 0 0 0 1 12.500L9 15z" fill="#e0452c" />
            <path d="M10 0.800a7.500 7.500 0 0 1 4 11.500L11 9z" fill="#fbc92e" />
            <circle cx="8.300" cy="7" r="4" fill="#3553a4" />
            <path d="M4 7c3 0 3 2 6 1-1 4-6 3-6-1" fill="#f5a52a" />
          </svg>
        }
      />
      <Task
        className="w-[28px]"
        icon={
          <svg width="16" height="16" viewBox="0 0 16 16">
            <ellipse cx="8" cy="8" rx="5.500" ry="6.200" fill="none" stroke="#d6202b" strokeWidth="3.300" />
          </svg>
        }
      />
      <Task
        className="w-[36px]"
        icon={
          <svg width="16" height="16" viewBox="0 0 16 16">
            <rect width="16" height="16" fill="#e8eddf" />
            <rect x="0.500" y="0.500" width="15" height="15" fill="none" stroke="#a8b59b" />
            <circle cx="8" cy="8" r="6" fill="#77b52c" />
            <path d="M5 6.500h6M4.500 9h7M5.500 11h5" stroke="#e4f3ce" strokeWidth="1.200" />
          </svg>
        }
      />
      <Task
        className="w-[30px]"
        icon={
          <svg width="15" height="15" viewBox="0 0 15 15">
            <path d="M2 7C3 1.500 12.500 0.500 13 8H5M4.500 6.500C3 14 9.500 14.500 12.500 12.500" fill="none" stroke="#1b7bd8" strokeWidth="2.800" />
          </svg>
        }
      />
      <Task
        className="w-[35px]"
        icon={
          <svg width="15" height="15" viewBox="0 0 15 15">
            <rect width="15" height="15" rx="1.500" fill="#243743" />
            <path d="M4 2.500l3 3-3 3z" fill="#dff3f2" />
            <path d="M7 12l5-4.500-2-2-5 4.500z" fill="#65bdc0" />
          </svg>
        }
      />
      <Task className="ml-[2px] w-[102px]" icon={<CamtasiaIcon color="#6aae22" />} label="Camtasia 9" w={39} />
      <Task
        className="w-[38px]"
        icon={
          <svg width="16" height="16" viewBox="0 0 16 16">
            <rect width="16" height="16" fill="#2c7562" />
            <path d="M1 15L15 1" stroke="#113b30" strokeWidth="4" />
            <circle cx="8" cy="8" r="5" fill="#f1f3f1" />
          </svg>
        }
      />
      <Task
        className="w-[27px]"
        icon={
          <svg width="15" height="15" viewBox="0 0 15 15">
            <circle cx="7.500" cy="7.500" r="7" fill="#eec565" />
            <path d="M3 5c3-3 5 1 9-1M3 9c2 2 6 2 9 0" stroke="#fbe9bd" strokeWidth="1.500" fill="none" />
            <circle cx="6" cy="7" r="1.500" fill="#e29a5a" />
          </svg>
        }
      />
      <Task className="ml-[6px] w-[102px]" icon={skypeIcon} label="Skype" w={21} />
      <Task className="ml-[2px] w-[107px] pl-[7px]" icon={<WordIcon size={15} />} label="Yeni Microsoft Wor..." w={74} active />
      <Task className="ml-[3px] w-[101px]" icon={soundForgeIcon} label="Sound Forge Pro 1..." w={71} />
      <Task className="ml-[6px] w-[101px]" icon={auditionIcon} label="kepez.mp3* - Adob..." w={74} />
      <Task className="ml-[6px] w-[101px]" icon={<CamtasiaIcon color="#e2493d" />} label="Recording..." w={42} />
      <Task className="ml-[6px] w-[101px]" icon={folderIcon} label="MÜZİKLER" w={37} />
      <div className="ml-[8px] flex items-center">
        <svg width="9" height="6" viewBox="0 0 9 6"><path d="M0.500 5l4-4 4 4" fill="none" stroke="#eee" /></svg>
        <svg width="11" height="10" viewBox="0 0 11 10" className="ml-[6px]">
          <path d="M2.500 1h8v5.500h-5M8 6.500v2M5.500 8.500h4M0.500 1.500h2v3h-2zM1.500 4.500v4h3" fill="none" stroke="#ddd" strokeWidth="0.900" />
        </svg>
        <svg width="12" height="10" viewBox="0 0 12 10" className="ml-[5px]">
          <path d="M0.500 3.500h2L5 1v8L2.500 6.500h-2zM6.500 3.500q1 1.500 0 3M8.200 2q2 3 0 6M10 1q2.500 4 0 8" fill="none" stroke="#ddd" strokeWidth="0.800" />
        </svg>
        <div className="ml-[3px] flex w-[40px] flex-col items-center pb-px text-[8.300px] leading-[12px]">
          <Fit w={18}>21:42</Fit>
          <Fit w={36}>16.08.2018</Fit>
        </div>
        <svg width="12" height="12" viewBox="0 0 12 12" className="ml-[9px]">
          <path d="M0.500 1h11v8H8L6 11 4.500 9h-4z" fill="none" stroke="#eee" />
        </svg>
      </div>
      <div className="ml-auto h-full w-[4px] border-l border-[#4b574b]" />
    </div>
  );
}

export default function App() {
  return (
    <div className="flex h-[720px] w-[1280px] flex-col overflow-hidden bg-white font-['Open_Sans','Noto_Sans',sans-serif]">
      <TitleBar />
      <TabRow />
      <Ribbon />
      <div className="h-[3px] shrink-0 border-t border-[#9b9ea8] bg-[#bfc2cc]" />
      <div className="flex h-[586px] shrink-0 bg-gradient-to-b from-[#d0d3dc] via-[#c5c8cf] to-[#b9bcc3]">
        <NavigationPane />
        <div className="flex flex-1 overflow-hidden border-t-2 border-[#cfd2da]">
          <DocumentPage />
          <ScrollBar />
        </div>
      </div>
      <StatusBar />
      <Taskbar />
    </div>
  );
}
